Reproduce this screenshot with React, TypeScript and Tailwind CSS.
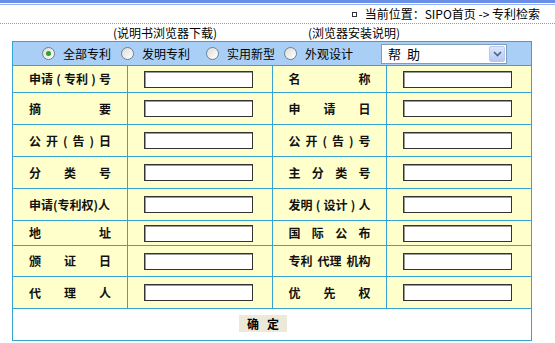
const rows: [string[], string[]][] = [
  [["申请", "(", "专利", ")", "号"], ["名", "称"]],
  [["摘", "要"], ["申", "请", "日"]],
  [["公", "开", "(", "告", ")", "日"], ["公", "开", "(", "告", ")", "号"]],
  [["分", "类", "号"], ["主", "分", "类", "号"]],
  [["申请(专利权)人"], ["发明", "(", "设计", ")", "人"]],
  [["地", "址"], ["国", "际", "公", "布"]],
  [["颁", "证", "日"], ["专利", "代理", "机构"]],
  [["代", "理", "人"], ["优", "先", "权"]],
];

function Label({ parts }: { parts: string[] }) {
  return (
    <div className="flex h-full items-center justify-center bg-[#ffffcc]">
      <div className="flex w-[82px] justify-between font-semibold leading-none text-[#111]">
        {parts.map((p, i) => (
          <span key={i}>{p}</span>
        ))}
      </div>
    </div>
  );
}

function Field() {
  return (
    <div className="flex h-full items-center bg-[#ffffcc] pl-[16px]">
      <div className="h-[17px] w-[109px] border border-[#333] bg-white shadow-[inset_1px_1px_0_#9a9a9a]" />
    </div>
  );
}

function Radio({ checked }: { checked?: boolean }) {
  return (
    <span className="flex h-[13px] w-[13px] items-center justify-center rounded-full border border-[#6f7f90] bg-gradient-to-br from-[#dcdcd6] to-white">
      {checked && <span className="h-[5px] w-[5px] rounded-full bg-[#2fa12f]" />}
    </span>
  );
}

export default function App() {
  return (
    <div className="h-[343px] w-[555px] overflow-hidden bg-white font-['Noto_Sans_CJK_SC',sans-serif] text-[12px] text-black">
      <div className="h-[3px] bg-[#6b8ee6]" />
      <div className="h-px bg-white" />
      <div className="h-px bg-[#93b1ef]" />

      <div className="flex h-[18px] items-center justify-end pr-[15px] leading-none">
        <span className="mr-[8px] h-[5px] w-[5px] border border-[#333]" />
        <span>当前位置：SIPO首页 -&gt; 专利检索</span>
      </div>
      <div className="border-t border-dotted border-[#9a9a9a]" />

      <div className="flex h-[17px] items-center pl-[113px] leading-none">
        <span className="w-[195px]">(说明书浏览器下载)</span>
        <span>(浏览器安装说明)</span>
      </div>

      <div className="ml-[12px] w-[520px] border border-[#35a3d4] bg-[#35a3d4]">
        <div className="grid grid-cols-[114px_144px_113px_144px] grid-rows-[23px_26px_31px_31px_31px_31px_24px_30px_31px_31px] gap-px">
          <div className="col-span-4 flex items-center bg-[#a9cff7] pl-[29px] text-[12px]">
            <Radio checked />
            <span className="ml-[8px]">全部专利</span>
            <span className="ml-[10px]"><Radio /></span>
            <span className="ml-[8px]">发明专利</span>
            <span className="ml-[16px]"><Radio /></span>
            <span className="ml-[8px]">实用新型</span>
            <span className="ml-[9px]"><Radio /></span>
            <span className="ml-[8px]">外观设计</span>
            <div className="ml-[28px] flex h-[20px] w-[126px] items-center justify-between border border-[#7f9db9] bg-white pl-[6px] pr-[1px]">
              <span className="text-[13px] leading-none">帮&nbsp;&nbsp;助</span>
              <span className="flex h-[16px] w-[16px] items-center justify-center rounded-[2px] border border-[#b6c9f0] bg-gradient-to-b from-[#dce7fd] to-[#b3c9f5]">
                <svg width="9" height="6" viewBox="0 0 9 6">
                  <path d="M1 1l3.5 3.5L8 1" fill="none" stroke="#4d6185" strokeWidth="1.6" />
                </svg>
              </span>
            </div>
          </div>

          {rows.map(([a, b], i) => (
            <div key={i} className="contents">
              <Label parts={a} />
              <Field />
              <Label parts={b} />
              <Field />
            </div>
          ))}

          <div className="col-span-4 bg-white pl-[226px] pt-[6px]">
            <div className="flex h-[17px] w-[48px] items-center justify-center bg-[#ece9d8] font-semibold leading-none">
              确&nbsp;&nbsp;&nbsp;定
            </div>
          </div>
        </div>
      </div>
    </div>
  );
}
